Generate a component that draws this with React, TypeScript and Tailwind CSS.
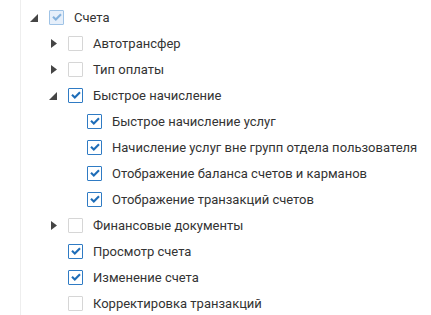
type Node = {
    label: string;
    level: number;
    toggle?: 'open' | 'closed';
    checked: boolean;
    disabled?: boolean;
};

const rows: Node[] = [
    { label: 'Счета', level: 0, toggle: 'open', checked: true, disabled: true },
    { label: 'Автотрансфер', level: 1, toggle: 'closed', checked: false },
    { label: 'Тип оплаты', level: 1, toggle: 'closed', checked: false },
    { label: 'Быстрое начисление', level: 1, toggle: 'open', checked: true },
    { label: 'Быстрое начисление услуг', level: 2, checked: true },
    { label: 'Начисление услуг вне групп отдела пользователя', level: 2, checked: true },
    { label: 'Отображение баланса счетов и карманов', level: 2, checked: true },
    { label: 'Отображение транзакций счетов', level: 2, checked: true },
    { label: 'Финансовые документы', level: 1, toggle: 'closed', checked: false },
    { label: 'Просмотр счета', level: 1, checked: true },
    { label: 'Изменение счета', level: 1, checked: true },
    { label: 'Корректировка транзакций', level: 1, checked: false },
];

const indent = ['pl-[4px]', 'pl-[23px]', 'pl-[42px]'];

function Toggle({ state }: { state?: 'open' | 'closed' }) {
    return (
        <span className="w-[24px] h-full flex items-center shrink-0">
            {state === 'open' && (
                <svg width="8" height="8" viewBox="0 0 8 8" className="ml-[5px] mt-[1px]">
                    <polygon points="8,0 8,8 0,8" fill="#454545" />
                </svg>
            )}
            {state === 'closed' && (
                <svg width="6" height="9" viewBox="0 0 6 9" className="ml-[7px] mt-[1px]">
                    <polygon points="0,0 6,4.5 0,9" fill="#454545" />
                </svg>
            )}
        </span>
    );
}

function Checkbox({ checked, disabled }: { checked: boolean; disabled?: boolean }) {
    const box = disabled
        ? 'border-[#9fc3e6] bg-[#e6effa]'
        : checked
          ? 'border-[#2f7bc4] bg-white'
          : 'border-[#d6d6d6] bg-white';
    return (
        <span className={`w-[15px] h-[15px] border rounded-[1px] flex items-center justify-center shrink-0 ${box}`}>
            {checked && (
                <svg width="10" height="8" viewBox="0 0 10 8">
                    <path
                        d="M1 3.8 L3.8 6.5 L9 1.3"
                        fill="none"
                        stroke={disabled ? '#84b1dc' : '#1e6db8'}
                        strokeWidth="2.1"
                    />
                </svg>
            )}
        </span>
    );
}

export default function App() {
    return (
        <div className="w-[431px] h-[315px] bg-white overflow-hidden font-['Roboto',sans-serif]">
            <div className="ml-[20px] h-full border-l border-[#eeeeee] pt-[4px]">
                {rows.map((row) => (
                    <div key={row.label} className={`h-[26px] flex items-center ${indent[row.level]}`}>
                        <Toggle state={row.toggle} />
                        <Checkbox checked={row.checked} disabled={row.disabled} />
                        <span className="ml-[10px] text-[13px] text-[#333333] whitespace-nowrap leading-none">
                            {row.label}
                        </span>
                    </div>
                ))}
            </div>
        </div>
    );
}
